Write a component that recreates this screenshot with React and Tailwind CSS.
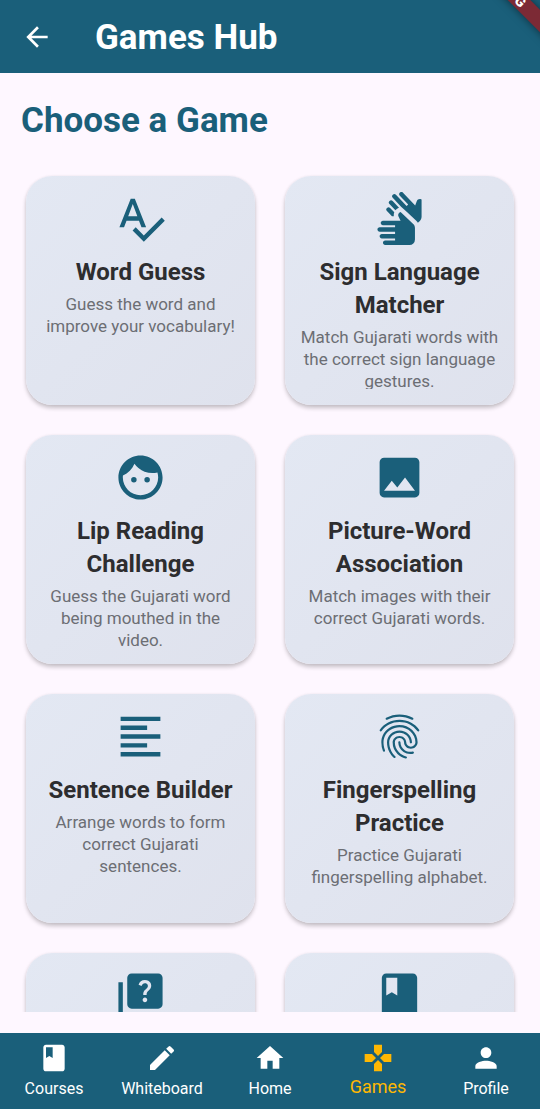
import {
  MdArrowBack,
  MdBook,
  MdEdit,
  MdFace,
  MdFingerprint,
  MdFormatAlignLeft,
  MdGames,
  MdHome,
  MdImage,
  MdPerson,
  MdQuiz,
  MdSignLanguage,
  MdSpellcheck,
} from "react-icons/md";

const games = [
  { id: "word-guess", title: "Word Guess", text: "Guess the word and improve your vocabulary!", Icon: MdSpellcheck },
  { id: "sign", title: "Sign Language Matcher", text: "Match Gujarati words with the correct sign language gestures.", Icon: MdSignLanguage },
  { id: "lip", title: "Lip Reading Challenge", text: "Guess the Gujarati word being mouthed in the video.", Icon: MdFace },
  { id: "picture", title: "Picture-Word Association", text: "Match images with their correct Gujarati words.", Icon: MdImage },
  { id: "sentence", title: "Sentence Builder", text: "Arrange words to form correct Gujarati sentences.", Icon: MdFormatAlignLeft },
  { id: "finger", title: "Fingerspelling Practice", text: "Practice Gujarati fingerspelling alphabet.", Icon: MdFingerprint },
  { id: "quiz", label: "Quiz", Icon: MdQuiz },
  { id: "book", label: "Book", Icon: MdBook },
];

const tabs = [
  { name: "Courses", Icon: MdBook },
  { name: "Whiteboard", Icon: MdEdit },
  { name: "Home", Icon: MdHome },
  { name: "Games", Icon: MdGames, active: true },
  { name: "Profile", Icon: MdPerson },
];

function GameCard({ title, text, label, Icon }) {
  return (
    <a
      href="#"
      aria-label={label}
      className="flex aspect-square min-h-0 flex-col rounded-[26px] bg-linear-to-br from-[#e3e8f3] to-[#dfe2ed] px-3.5 pt-4 pb-4 shadow-[0_3px_4px_rgba(0,0,0,0.22),0_0_3px_rgba(0,0,0,0.06)]"
    >
      <div className="flex min-h-0 flex-1 flex-col items-center overflow-hidden text-center">
        <Icon className="size-[53px] shrink-0 text-[#1a5f7a]" />
        {title && (
          <>
            <h3 className="mt-[11px] text-[24px] leading-[33px] font-bold text-[#2d2d2f]">{title}</h3>
            <p className="mt-1 text-[17px] leading-[22px] text-[#6c6e74]">{text}</p>
          </>
        )}
      </div>
    </a>
  );
}

export default function App() {
  return (
    <div className="flex h-screen flex-col overflow-hidden bg-[#fef7ff] font-['Roboto',sans-serif]">
      <header className="relative flex h-[73px] shrink-0 items-center overflow-hidden bg-[#1a5f7a] text-white">
        <button type="button" aria-label="Back" className="ml-[21px]">
          <MdArrowBack className="size-8" />
        </button>
        <h1 className="ml-[42px] pt-0.5 text-[35px] leading-10 font-bold">Games Hub</h1>
        <div className="absolute -top-[19px] -right-12 flex h-4 w-[160px] rotate-45 items-center justify-center bg-[#7c2a35] text-[14px] leading-4 font-black text-white shadow-[0_0_8px_rgba(0,0,0,0.5)]">
          DEBUG
        </div>
      </header>

      <main className="mb-[21px] min-h-0 flex-1 overflow-y-auto [scrollbar-width:none]">
        <h2 className="px-[21px] pt-7 text-[35px] leading-10 font-bold text-[#1a5f7a]">Choose a Game</h2>
        <div className="grid grid-cols-2 gap-[30px] px-[26px] pt-[35px] pb-8">
          {games.map((game) => (
            <GameCard key={game.id} {...game} />
          ))}
        </div>
      </main>

      <nav className="grid h-[76px] shrink-0 grid-cols-5 bg-[#1a5f7a] text-white">
        {tabs.map(({ name, Icon, active }) => (
          <a
            key={name}
            href="#"
            aria-current={active ? "page" : undefined}
            className={
              active
                ? "flex flex-col items-center pt-[9px] text-[18px] leading-[26px] text-[#ffb703]"
                : "flex flex-col items-center pt-[9px] text-[16px] leading-[30px]"
            }
          >
            <Icon className="size-8 shrink-0" />
            <span>{name}</span>
          </a>
        ))}
      </nav>
    </div>
  );
}
